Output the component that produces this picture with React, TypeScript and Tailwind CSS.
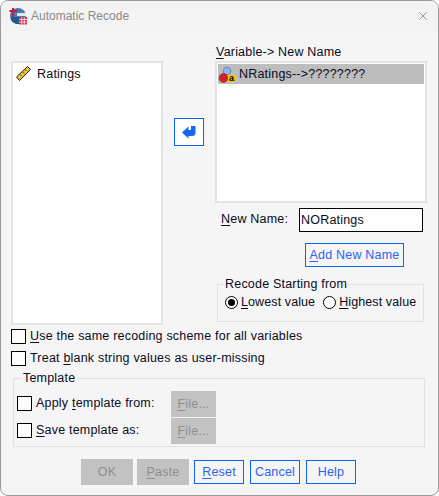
import { X } from 'lucide-react';

const font = "font-['Liberation_Sans',Arial,sans-serif]";

function U({ children }: { children: string }) {
  return <span className="underline underline-offset-2">{children}</span>;
}

function Check({ children, className = '' }: { children: React.ReactNode; className?: string }) {
  return (
    <div className={`flex items-center gap-[4px] ${className}`}>
      <span className="w-[15px] h-[15px] border border-black bg-[#fdfdfd] shrink-0" />
      <span className="leading-[15px]">{children}</span>
    </div>
  );
}

function DlgButton({ children, disabled, className = '' }: { children: React.ReactNode; disabled?: boolean; className?: string }) {
  return (
    <div
      className={`flex items-center justify-center ${
        disabled ? 'bg-[#c2c2c2] text-[#8f8f8f]' : 'border border-[#0f62fe] text-[#2b62f0]'
      } ${className}`}
    >
      {children}
    </div>
  );
}

function RulerIcon() {
  return (
    <svg width="17" height="17" viewBox="0 0 17 17">
      <path d="M1.500 12 12.500 1.500 15.500 4.500 4.500 15.500Z" fill="#f2c230" stroke="#1c1c1c" strokeWidth="1" />
      <path d="M5 9.500 6.500 11M7.500 7 9 8.500M10 4.500 11.500 6" stroke="#1c1c1c" strokeWidth="0.8" />
    </svg>
  );
}

function NominalIcon() {
  return (
    <svg width="18" height="18" viewBox="0 0 18 18">
      <circle cx="9" cy="6" r="3.800" fill="#8db8e8" stroke="#4a7fc0" strokeWidth="0.8" />
      <circle cx="5.500" cy="13" r="4.400" fill="#d0202c" stroke="#9a1a22" strokeWidth="0.6" />
      <rect x="10" y="10" width="7" height="7" fill="#f5c800" />
      <text x="13.500" y="16.200" fontSize="9" fontWeight="700" textAnchor="middle" fontFamily="Liberation Sans" fill="#000">a</text>
    </svg>
  );
}

function AppIcon() {
  return (
    <svg width="18" height="18" viewBox="0 0 18 18">
      <circle cx="9" cy="9" r="8" fill="#3f7fb8" />
      <path d="M2 13a8 8 0 0 0 11 3V10H2Z" fill="#1f5a94" />
      <rect x="8" y="6" width="9" height="3" fill="#dfe8f0" />
      <path d="M4 1v9M0.500 4h8" stroke="#d01830" strokeWidth="2" />
      <rect x="10" y="10" width="8" height="7.500" fill="#d8304a" />
      <path d="M10 12.500h8M10 15h8M12.700 10v7.500M15.300 10v7.500" stroke="#fff" strokeWidth="0.7" />
    </svg>
  );
}

export default function App() {
  return (
    <div className={`${font} w-[439px] h-[496px] bg-[#f5f5f5] border border-[#9a9a9a] rounded-lg overflow-hidden text-[12.5px] text-[#0b0b1e] tracking-[0.2px]`}>
      {/* Title bar */}
      <div className="h-[30px] flex items-center pl-[8px] pr-[8px] bg-[#f3f3f3]">
        <AppIcon />
        <span className="ml-[4px] text-[12px] tracking-normal text-[#8a8a8a]">Automatic Recode</span>
        <X className="ml-auto w-[14px] h-[14px] text-[#777]" strokeWidth={1.3} />
      </div>

      <div className="pl-[10px]">
        {/* Lists */}
        <div className="flex h-[294px]">
          <div className="w-[152px] h-[264px] mt-[30px] bg-white border-2 border-[#e3e3e3] pt-[2px] pl-[2px] flex items-start gap-[5px] shrink-0">
            <RulerIcon />
            <span className="leading-[18px]">Ratings</span>
          </div>

          <div className="w-[52px] shrink-0 pl-[11px] pt-[87px]">
            <div className="w-[30px] h-[28px] bg-white border border-[#0f62fe] flex items-center justify-center">
              <svg width="14" height="14" viewBox="0 0 14 14">
                <path d="M0 7.500 6.500 1.500V5H9V1H13.500V7.500Q13.500 11 10 11H6.500V13.500Z" fill="#1468ef" />
              </svg>
            </div>
          </div>

          <div className="w-[212px] shrink-0">
            <div className="h-[30px] pt-[14px] pl-[1px] leading-[15px]"><U>V</U>ariable-&gt; New Name</div>
            <div className="h-[142px] bg-white border-2 border-[#e3e3e3] p-[1px]">
              <div className="h-[20px] bg-[#bdbdbd] flex items-center gap-[3px]">
                <NominalIcon />
                <span>NRatings--&gt;????????</span>
              </div>
            </div>
            <div className="flex items-start pl-[6px] pt-[5px]">
              <span className="w-[78px] pt-[4px] leading-[15px]"><U>N</U>ew Name:</span>
              <div className="w-[124px] h-[24px] bg-white border border-black pl-[1px] pt-[1px] flex items-center">NORatings</div>
            </div>
            <DlgButton className="ml-[90px] mt-[11px] w-[99px] h-[24px]"><span><U>A</U>dd New Name</span></DlgButton>
            <fieldset className="ml-[2px] mt-[10px] w-[207px] h-[45px] border border-[#e0e0e0] pl-[7px]">
              <legend className="px-[1px] -ml-[1px] leading-[14px]">Recode Starting from</legend>
              <div className="flex items-center mt-[2px] tracking-[0.1px]">
                <span className="w-[13px] h-[13px] rounded-full border border-black flex items-center justify-center bg-white">
                  <span className="w-[7px] h-[7px] rounded-full bg-black" />
                </span>
                <span className="ml-[3px]"><U>L</U>owest value</span>
                <span className="ml-[8px] w-[13px] h-[13px] rounded-full border border-black bg-white" />
                <span className="ml-[3px]"><U>H</U>ighest value</span>
              </div>
            </fieldset>
          </div>
        </div>

        <Check className="mt-[4px]"><U>U</U>se the same recoding scheme for all variables</Check>
        <Check className="mt-[7px]">Treat <U>b</U>lank string values as user-missing</Check>

        {/* Template */}
        <fieldset className="ml-[2px] mt-[5px] w-[412px] h-[76px] border border-[#e0e0e0] pl-[3px]">
          <legend className="ml-[4px] px-[2px] leading-[14px]">Template</legend>
          <div className="flex items-center h-[26px] mt-[6px]">
            <Check className="w-[154px] -mt-[2px]">Apply <U>t</U>emplate from:</Check>
            <DlgButton disabled className="w-[45px] h-[26px]"><span><U>F</U>ile...</span></DlgButton>
          </div>
          <div className="flex items-center h-[26px] mt-[1px]">
            <Check className="w-[154px] -mt-[2px]"><U>S</U>ave template as:</Check>
            <DlgButton disabled className="w-[45px] h-[26px]"><span><U>F</U>ile...</span></DlgButton>
          </div>
        </fieldset>

        {/* Buttons */}
        <div className="flex items-start mt-[12px] pl-[70px]">
          <DlgButton disabled className="w-[52px] h-[26px]">OK</DlgButton>
          <DlgButton disabled className="w-[52px] h-[26px] ml-[4px]"><span><U>P</U>aste</span></DlgButton>
          <DlgButton className="w-[50px] h-[24px] mt-[1px] ml-[5px]"><span><U>R</U>eset</span></DlgButton>
          <DlgButton className="w-[50px] h-[24px] mt-[1px] ml-[6px]">Cancel</DlgButton>
          <DlgButton className="w-[50px] h-[24px] mt-[1px] ml-[6px]">Help</DlgButton>
        </div>
      </div>
    </div>
  );
}
